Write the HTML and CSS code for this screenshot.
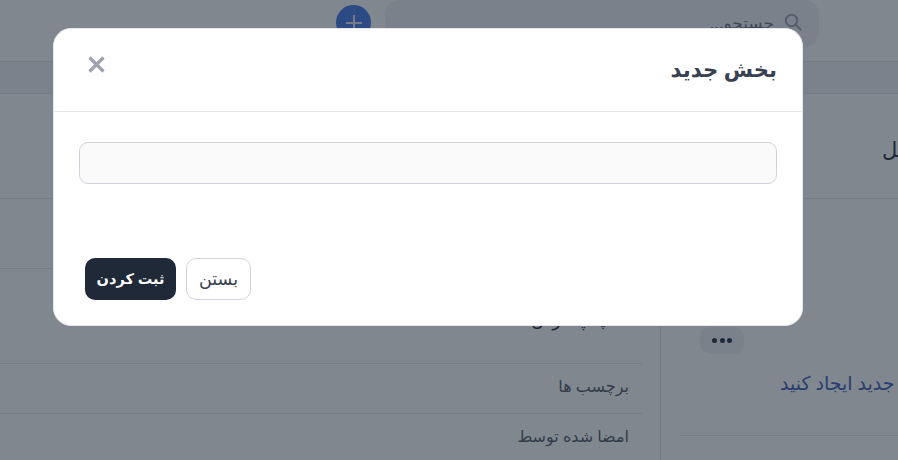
FILE: index.html
```html
<!DOCTYPE html>
<html lang="fa" dir="rtl">
<head>
<meta charset="utf-8">
<title>بخش جدید</title>
<link rel="stylesheet" href="styles.css">
</head>
<body>
<div class="page">
  <header class="topbar">
    <div class="search">
      <svg class="search-icon" viewBox="0 0 18 18" width="18" height="18" aria-hidden="true"><circle cx="7.5" cy="7.5" r="5.7" fill="none" stroke="#9ca3af" stroke-width="2"/><path d="M11.8 11.8L16.5 16.5" stroke="#9ca3af" stroke-width="2.2" stroke-linecap="round"/></svg>
      <span class="search-text">جستجو...</span>
    </div>
    <button class="add-btn" aria-label="افزودن">
      <svg viewBox="0 0 20 20" width="20" height="20" aria-hidden="true"><path d="M10 2V18M2 10H18" stroke="#e5e7eb" stroke-width="2"/></svg>
    </button>
  </header>
  <div class="subbar"></div>
  <section class="intro"><h2 class="intro-title">تکمیل</h2></section>
  <div class="columns">
    <aside class="side">
      <button class="dots" aria-label="بیشتر"><i></i><i></i><i></i></button>
      <a class="side-link">یک بخش جدید ایجاد کنید</a>
      <div class="side-rule"></div>
    </aside>
    <main class="content">
      <div class="row row-a"></div>
      <div class="row row-b"><span class="row-heading">چاپ کردن</span></div>
      <div class="row row-c"><span>برچسب ها</span></div>
      <div class="row row-c"><span>امضا شده توسط</span></div>
    </main>
  </div>
</div>

<div class="overlay">
  <div class="modal">
    <div class="modal-head">
      <h3 class="modal-title">بخش جدید</h3>
      <button class="close-x" aria-label="بستن">
        <svg viewBox="0 0 17 17" width="17" height="17" aria-hidden="true"><path d="M1.5 1.5L15.5 15.5M15.5 1.5L1.5 15.5" stroke="#9ca3af" stroke-width="3.2"/></svg>
      </button>
    </div>
    <div class="modal-body">
      <input class="field" type="text">
    </div>
    <div class="modal-foot">
      <button class="btn btn-light">بستن</button>
      <button class="btn btn-dark">ثبت کردن</button>
    </div>
  </div>
</div>
</body>
</html>
```
FILE: styles.css
```css
* { box-sizing: border-box; }
html, body { margin: 0; height: 100%; overflow: hidden; }
body {
  font-family: "Noto Sans", "DejaVu Sans", sans-serif;
  background: #fff;
  color: #1f2937;
}
button { font-family: inherit; }

.page { width: 898px; height: 460px; overflow: hidden; }

.topbar {
  height: 62px;
  border-bottom: 1px solid #e5e7eb;
  display: flex;
  align-items: flex-start;
  padding-right: 79px;
  gap: 14px;
}
.search {
  width: 434px;
  height: 47px;
  background: #f1f2f6;
  border-radius: 14px;
  display: flex;
  align-items: center;
  padding: 0 17px 3px 0;
  gap: 10px;
}
.search-text { font-size: 17px; color: #6b7280; }
.add-btn {
  width: 35px;
  height: 35px;
  margin-top: 5px;
  border: 0;
  border-radius: 50%;
  background: #3f74e6;
  display: flex;
  align-items: center;
  justify-content: center;
  padding: 0;
}

.subbar {
  height: 32px;
  background: #f3f4f6;
  border-bottom: 1px solid #e5e7eb;
}

.intro {
  height: 105px;
  border-bottom: 1px solid #e5e7eb;
  display: flex;
  flex-direction: column;
  justify-content: center;
  padding-top: 5px;
}
.intro-title {
  margin: 0 0 0 882px;
  align-self: flex-end;
  font-size: 21px;
  font-weight: 400;
  white-space: nowrap;
}

.columns { display: flex; height: 262px; }

.side {
  width: 237px;
  flex: none;
  padding-top: 128px;
  display: flex;
  flex-direction: column;
  overflow: hidden;
}
.dots {
  align-self: flex-end;
  margin-left: 39px;
  width: 44px;
  height: 27px;
  border: 0;
  border-radius: 10px;
  background: #f1f2f6;
  display: flex;
  align-items: center;
  justify-content: center;
  gap: 2.5px;
  padding: 0;
}
.dots i { width: 5px; height: 5px; border-radius: 50%; background: #1f2937; }
.side-link {
  align-self: flex-end;
  margin: 16px 0 0 119px;
  font-size: 19px;
  color: #3559b5;
  white-space: nowrap;
}
.side-rule {
  height: 1px;
  background: #e5e7eb;
  margin: 39px 0 0 0;
  margin-left: 19px;
}

.content {
  flex: 1;
  border-right: 1px solid #e5e7eb;
  padding: 0 18px 0 0;
}
.row { border-bottom: 1px solid #e5e7eb; display: flex; align-items: center; padding-right: 13px; }
.row-a { height: 70px; }
.row-b { height: 95px; padding-top: 5px; }
.row-c { height: 50px; font-size: 16px; color: #4b5563; padding-bottom: 5px; }
.row-heading { font-size: 18px; color: #1f2937; padding-right: 20px; }

.overlay {
  position: fixed;
  inset: 0;
  background: rgba(31, 41, 55, 0.56);
  padding: 28px 0 0 53px;
  display: flex;
  justify-content: flex-end;
  align-items: flex-start;
}
.modal {
  width: 750px;
  height: 298px;
  background: #fff;
  border: 1px solid #e5e7eb;
  border-radius: 18px;
  display: flex;
  flex-direction: column;
}
.modal-head {
  height: 83px;
  flex: none;
  border-bottom: 1px solid #e5e7eb;
  display: flex;
  align-items: center;
  justify-content: space-between;
  padding: 0 25px 0 34px;
}
.modal-title { margin: 0; padding-bottom: 3px; font-size: 21.2px; font-weight: 700; color: #374151; }
.close-x { border: 0; background: none; padding: 0; display: flex; margin-bottom: 12px; }
.modal-body { padding: 30px 25px 0; flex: 1; }
.field {
  display: block;
  width: 100%;
  height: 42px;
  background: #fafafa;
  border: 1px solid #d1d1dc;
  border-radius: 9px;
}
.modal-foot {
  display: flex;
  justify-content: flex-end;
  gap: 10px;
  padding: 0 31px 25px;
}
.btn { height: 42px; border-radius: 10px; padding: 0 0 3px; }
.btn-light { width: 65px; background: #fff; border: 1px solid #d1d5db; color: #374151; font-size: 17.5px; }
.btn-dark { width: 91px; background: #1f2937; border: 0; color: #fff; font-size: 14.5px; font-weight: 700; }
```
